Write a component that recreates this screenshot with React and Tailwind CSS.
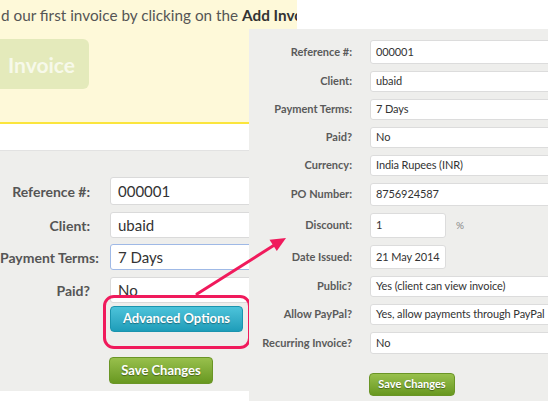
import React from "react";

const font = { fontFamily: "Lato, 'Open Sans', sans-serif" };

const bgRows = [
  { label: "Reference #:", value: "000001", h: "h-[28px]", mt: "mt-0" },
  { label: "Client:", value: "ubaid", h: "h-[26px]", mt: "mt-[7px]" },
  { label: "Payment Terms:", value: "7 Days", h: "h-[26px]", mt: "mt-[6px]", focus: true },
  { label: "Paid?", value: "No", h: "h-[26px]", mt: "mt-[7px]" },
];

const advRows = [
  { label: "Reference #:", value: "000001", h: "h-[24px]" },
  { label: "Client:", value: "ubaid", h: "h-[21px]" },
  { label: "Payment Terms:", value: "7 Days", h: "h-[21px]" },
  { label: "Paid?", value: "No", h: "h-[21px]" },
  { label: "Currency:", value: "India Rupees (INR)", h: "h-[21px]" },
  { label: "PO Number:", value: "8756924587", h: "h-[23px]" },
  { label: "Discount:", value: "1", h: "h-[25px]", short: true, suffix: "%" },
  { label: "Date Issued:", value: "21 May 2014", h: "h-[24px]", short: true },
  { label: "Public?", value: "Yes (client can view invoice)", h: "h-[21px]" },
  { label: "Allow PayPal?", value: "Yes, allow payments through PayPal", h: "h-[21px]" },
  { label: "Recurring Invoice?", value: "No", h: "h-[22px]" },
];

const App = () => {
  return (
    <div className="relative w-[548px] h-[401px] overflow-hidden bg-white" style={font}>
      {/* page behind */}
      <div className="flex flex-col w-[548px]">
        <div className="w-[297px] h-[124px] bg-[#fef9d9] border-b-2 border-[#fbe53c] overflow-hidden">
          <p className="whitespace-nowrap text-[15.3px] text-[#555] leading-none pt-[8px] pl-[1px]">
            d our first invoice by clicking on the <b className="text-[#333]">Add Invoice</b> button
          </p>
          <div className="mt-[16px] w-[89px] h-[50px] rounded-r-[6px] bg-[#e4eabb] flex items-center pl-[8px]">
            <span className="text-[21px] font-bold text-[#f7f9ea]">Invoice</span>
          </div>
        </div>
        <div className="h-[27px] bg-white border-b border-[#e2e2e2]" />

        <div className="h-[240px] bg-[#eeeeec] pt-[26px] flex flex-col">
          {bgRows.map((r) => (
            <div key={r.label} className={`flex items-center ${r.mt}`}>
              <div className="w-[90px] shrink-0 text-right text-[14px] font-bold text-[#555] whitespace-nowrap">{r.label}</div>
              <div
                className={`ml-[20px] w-[200px] shrink-0 ${r.h} bg-white rounded-[3px] border ${r.focus ? "border-[#9fb9e6]" : "border-[#dadada]"} flex items-center pl-[7px] text-[15px] text-[#333]`}
              >
                {r.value}
              </div>
            </div>
          ))}
          <div className="ml-[110px] mt-[3px] w-[133px] h-[26px] rounded-[4px] bg-gradient-to-b from-[#4cc3da] to-[#1d9db9] border border-[#1b94ae] flex items-center justify-center text-[13px] font-bold text-white [text-shadow:0_1px_1px_rgba(0,0,0,0.35)]">
            Advanced Options
          </div>
          <div className="ml-[109px] mt-[25px] w-[104px] h-[27px] rounded-[4px] bg-gradient-to-b from-[#98c04c] to-[#68981f] border border-[#6a9526] flex items-center justify-center text-[13px] font-bold text-white [text-shadow:0_1px_1px_rgba(0,0,0,0.4)]">
            Save Changes
          </div>
        </div>
        <div className="h-[10px] w-[249px] bg-white" />
      </div>

      {/* highlight */}
      <div className="absolute left-[103px] top-[295px] w-[148px] h-[54px] rounded-[11px] border-[3px] border-[#f01a5c]" />

      {/* zoomed advanced options panel */}
      <div className="absolute left-[249px] top-[29px] w-[299px] h-[372px] bg-[#eeeeec] overflow-hidden pt-[11px]">
        <div className="flex flex-col gap-[7px]">
          {advRows.map((r) => (
            <div key={r.label} className="flex items-center">
              <div className="w-[103px] shrink-0 text-right text-[11px] font-bold text-[#5a5a5a] whitespace-nowrap">{r.label}</div>
              <div
                className={`ml-[18px] ${r.short ? "w-[76px]" : "w-[200px]"} ${r.h} shrink-0 bg-white rounded-[3px] border border-[#dcdcdc] flex items-center pl-[5px] text-[11px] tracking-[-0.1px] text-[#333] whitespace-nowrap`}
              >
                {r.value}
              </div>
              {r.suffix && <span className="ml-[10px] text-[10px] text-[#888]">{r.suffix}</span>}
            </div>
          ))}
        </div>
        <div className="ml-[120px] mt-[19px] w-[86px] h-[23px] rounded-[4px] bg-gradient-to-b from-[#98c04c] to-[#68981f] border border-[#6a9526] flex items-center justify-center text-[11px] font-bold text-white [text-shadow:0_1px_1px_rgba(0,0,0,0.4)]">
          Save Changes
        </div>
      </div>

      {/* arrow */}
      <svg className="absolute left-0 top-0 pointer-events-none" width="548" height="401">
        <line x1="197" y1="294" x2="276" y2="244" stroke="#f01a5c" strokeWidth="3" strokeLinecap="round" />
        <polygon points="286,238 276.8,251 269.5,239.8" fill="#f01a5c" />
      </svg>
    </div>
  );
};

export default App;
